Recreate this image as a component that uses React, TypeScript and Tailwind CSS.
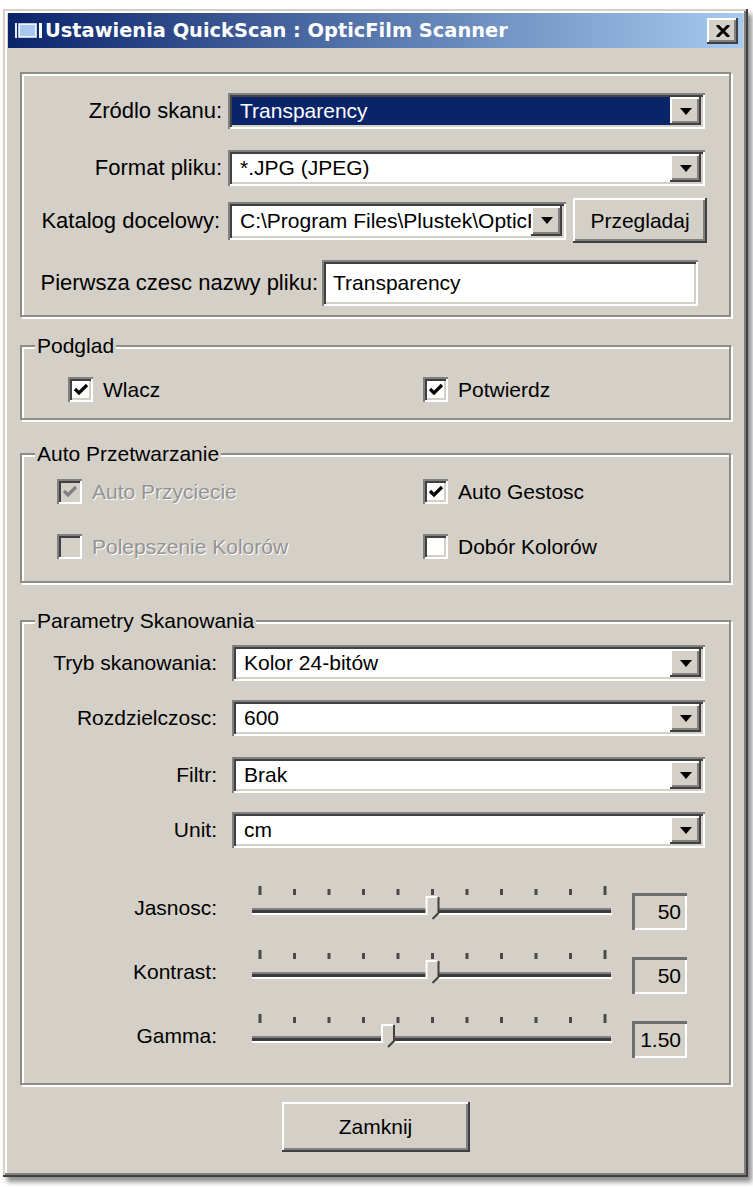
import type { ReactNode } from 'react'

const sunken =
  'shadow-[inset_2px_2px_0_#808080,inset_-2px_-2px_0_#ffffff,inset_4px_4px_0_#404040,inset_-4px_-4px_0_#d4d0c8]'
const raised =
  'shadow-[inset_-2px_-2px_0_#404040,inset_2px_2px_0_#ffffff,inset_-4px_-4px_0_#808080,inset_4px_4px_0_#d4d0c8]'

function Label({ children, className = '' }: { children: ReactNode; className?: string }) {
  return <div className={`text-right leading-[24px] whitespace-nowrap ${className}`}>{children}</div>
}

function Arrow() {
  return (
    <svg width="12" height="7" viewBox="0 0 12 7">
      <path d="M0 0 H12 L6 7 Z" fill="#000" />
    </svg>
  )
}

function Combo({ value, className, selected = false }: { value: string; className: string; selected?: boolean }) {
  return (
    <div className={`flex bg-white p-[4px] ${sunken} ${className}`}>
      <div
        className={`flex-1 min-w-0 flex items-center pl-[8px] text-[21px] leading-[24px] whitespace-nowrap overflow-hidden ${
          selected ? 'bg-[#0a246a] text-white' : 'text-black'
        }`}
      >
        {value}
      </div>
      <div className={`w-[31px] shrink-0 bg-[#d4d0c8] flex items-center justify-center ${raised}`}>
        <Arrow />
      </div>
    </div>
  )
}

function Button({ children, className }: { children: ReactNode; className: string }) {
  return (
    <div className={`bg-[#d4d0c8] flex items-center justify-center text-[21px] leading-[24px] ${raised} ${className}`}>
      {children}
    </div>
  )
}

function Check({ label, checked = false, disabled = false }: { label: string; checked?: boolean; disabled?: boolean }) {
  return (
    <div className="flex items-center">
      <div
        className={`w-[25px] h-[25px] flex items-center justify-center ${sunken} ${
          disabled ? 'bg-[#d4d0c8]' : 'bg-white'
        }`}
      >
        {checked && (
          <svg width="16" height="13" viewBox="0 0 16 13">
            <path d="M2 6 L6 10 L14 2" fill="none" stroke={disabled ? '#808080' : '#000'} strokeWidth="3.2" />
          </svg>
        )}
      </div>
      <span
        className={`ml-[10px] text-[21px] leading-[24px] ${
          disabled ? 'text-[#939393] [text-shadow:1px_1px_0_#ffffff]' : 'text-black'
        }`}
      >
        {label}
      </span>
    </div>
  )
}

function Group({ title, className, children }: { title?: string; className: string; children: ReactNode }) {
  return (
    <div className={`relative border-2 border-[#8e8c86] shadow-[inset_2px_2px_0_#ffffff,2px_2px_0_#ffffff] ${className}`}>
      {title && (
        <div className="absolute left-[13px] top-[-13px] bg-[#d4d0c8] px-[2px] text-[21px] leading-[24px] whitespace-nowrap">
          {title}
        </div>
      )}
      {children}
    </div>
  )
}

function Slider({ pos }: { pos: number }) {
  const ticks = Array.from({ length: 11 }, (_, i) => 10 + i * 34.5)
  return (
    <svg width="364" height="44" viewBox="0 0 364 44" className="ml-[33px] shrink-0">
      {ticks.map((x, i) => {
        const big = i === 0 || i === 10
        return <rect key={i} x={x - 1.5} y={big ? 6 : 9} width="3" height={big ? 9 : 6} fill="#4a4a4a" />
      })}
      <rect x="2" y="28" width="359" height="2" fill="#808080" />
      <rect x="2" y="30" width="359" height="3" fill="#3c3c3c" />
      <rect x="2" y="33" width="360" height="2" fill="#ffffff" />
      <path d={`M${pos - 6} 17 H${pos + 6} V33 L${pos} 39 L${pos - 6} 33 Z`} fill="#d4d0c8" />
      <path d={`M${pos - 6} 33 V17 H${pos + 5}`} fill="none" stroke="#ffffff" strokeWidth="2" />
      <path d={`M${pos + 6} 17 V33 L${pos} 39`} fill="none" stroke="#404040" strokeWidth="2" />
    </svg>
  )
}

function SliderRow({ label, pos, value, className = '' }: { label: string; pos: number; value: string; className?: string }) {
  return (
    <div className={`flex items-start h-[52px] ${className}`}>
      <Label className="w-[195px] mt-[16px] text-[21px]">{label}</Label>
      <Slider pos={pos} />
      <div className="ml-[18px] mt-[13px] w-[55px] h-[37px] flex items-center justify-end pr-[6px] text-[21px] leading-[24px] shadow-[inset_3px_3px_0_#6e6e6e,inset_-2px_-2px_0_#ffffff]">
        {value}
      </div>
    </div>
  )
}

function TitleBar() {
  return (
    <div className="h-[35px] bg-[linear-gradient(to_right,#0a246a,#a6caf0)] flex items-center pl-[7px] pr-[5px]">
      <svg width="28" height="15" viewBox="0 0 28 15">
        <rect x="0" y="0" width="2" height="15" fill="#e4ecfa" />
        <rect x="4" y="1" width="17" height="13" fill="#a8c8ee" stroke="#ffffff" strokeWidth="1.5" />
        <rect x="24" y="0" width="3" height="15" fill="#ffffff" />
      </svg>
      <span className="ml-[2px] font-['DejaVu_Sans',sans-serif] font-bold text-[19.4px] leading-none text-white whitespace-nowrap">
        Ustawienia QuickScan : OpticFilm Scanner
      </span>
      <div className={`ml-auto w-[31px] h-[26px] bg-[#d4d0c8] flex items-center justify-center ${raised}`}>
        <svg width="14" height="12" viewBox="0 0 14 12">
          <path d="M1 0 L13 12 M13 0 L1 12" stroke="#000" strokeWidth="3" />
        </svg>
      </div>
    </div>
  )
}

export default function App() {
  return (
    <div className="w-[753px] h-[1187px] bg-white pt-[9px] pl-[3px] font-['Liberation_Sans',Arial,sans-serif] text-black">
      <div className="w-[745px] h-[1168px] bg-[#d4d0c8] px-[5px] pt-[4px] shadow-[inset_-2px_-2px_0_#404040,inset_2px_2px_0_#d4d0c8,inset_-4px_-4px_0_#808080,inset_4px_4px_0_#ffffff,4px_5px_5px_rgba(0,0,0,0.45)]">
        <TitleBar />
        <div className="px-[12px] pt-[24px]">
          <Group className="h-[245px]">
            <div className="pt-[19px]">
              <div className="flex items-center">
                <Label className="w-[200px] text-[22px]">Zródlo skanu:</Label>
                <Combo className="ml-[6px] w-[477px] h-[36px]" value="Transparency" selected />
              </div>
              <div className="flex items-center mt-[21px]">
                <Label className="w-[200px] text-[22px]">Format pliku:</Label>
                <Combo className="ml-[6px] w-[477px] h-[36px]" value="*.JPG (JPEG)" />
              </div>
              <div className="flex items-center mt-[12px] h-[45px]">
                <Label className="w-[198px] mr-[2px] text-[22px]">Katalog docelowy:</Label>
                <Combo className="ml-[6px] w-[338px] h-[38px]" value="C:\Program Files\Plustek\OpticFilm" />
                <Button className="ml-[7px] w-[134px] h-[45px]">Przegladaj</Button>
              </div>
              <div className="flex items-center mt-[17px]">
                <Label className="w-[296px] text-[22px]">Pierwsza czesc nazwy pliku:</Label>
                <div className={`ml-[4px] w-[376px] h-[46px] bg-white flex items-center pl-[11px] text-[21px] leading-[24px] ${sunken}`}>
                  Transparency
                </div>
              </div>
            </div>
          </Group>

          <Group title="Podglad" className="mt-[28px] h-[75px]">
            <div className="flex mt-[30px] ml-[46px]">
              <div className="w-[355px]">
                <Check label="Wlacz" checked />
              </div>
              <Check label="Potwierdz" checked />
            </div>
          </Group>

          <Group title="Auto Przetwarzanie" className="mt-[33px] h-[130px]">
            <div className="flex mt-[24px] ml-[35px]">
              <div className="w-[366px]">
                <Check label="Auto Przyciecie" checked disabled />
              </div>
              <Check label="Auto Gestosc" checked />
            </div>
            <div className="flex mt-[30px] ml-[35px]">
              <div className="w-[366px]">
                <Check label="Polepszenie Kolorów" disabled />
              </div>
              <Check label="Dobór Kolorów" />
            </div>
          </Group>

          <Group title="Parametry Skanowania" className="mt-[37px] h-[465px]">
            <div className="pt-[23px]">
              <div className="flex items-center">
                <Label className="w-[195px] text-[21px]">Tryb skanowania:</Label>
                <Combo className="ml-[15px] w-[473px] h-[36px]" value="Kolor 24-bitów" />
              </div>
              <div className="flex items-center mt-[19px]">
                <Label className="w-[195px] text-[21px]">Rozdzielczosc:</Label>
                <Combo className="ml-[15px] w-[473px] h-[36px]" value="600" />
              </div>
              <div className="flex items-center mt-[21px]">
                <Label className="w-[195px] text-[21px]">Filtr:</Label>
                <Combo className="ml-[15px] w-[473px] h-[36px]" value="Brak" />
              </div>
              <div className="flex items-center mt-[19px]">
                <Label className="w-[195px] text-[21px]">Unit:</Label>
                <Combo className="ml-[15px] w-[473px] h-[36px]" value="cm" />
              </div>
              <SliderRow className="mt-[32px]" label="Jasnosc:" pos={182.5} value="50" />
              <SliderRow className="mt-[12px]" label="Kontrast:" pos={182.5} value="50" />
              <SliderRow className="mt-[12px]" label="Gamma:" pos={138} value="1.50" />
            </div>
          </Group>

          <Button className="mt-[17px] mx-auto w-[188px] h-[50px]">Zamknij</Button>
        </div>
      </div>
    </div>
  )
}
